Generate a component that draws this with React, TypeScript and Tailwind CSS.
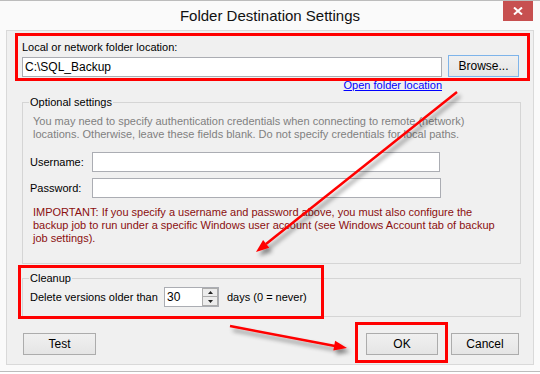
import React from 'react';

const Btn: React.FC<{ label: string; w: string; focus?: boolean }> = ({ label, w, focus }) => (
  <div
    className={`${w} h-[22px] flex items-center justify-center border bg-[linear-gradient(#f0f0f0,#e5e5e5)] text-[12px] text-black ${
      focus ? 'border-[#7eb4ea]' : 'border-[#acacac]'
    }`}
  >
    {label}
  </div>
);

const TextBox: React.FC<{ w: string; value?: string }> = ({ w, value }) => (
  <div className={`${w} h-[20px] border border-[#abadb3] bg-white flex items-center px-[2px] text-[12px] text-black`}>
    {value}
  </div>
);

// arrow overlay, drawn on top of the dialog like in the original annotation
const Annotations: React.FC = () => (
  <svg className="absolute inset-0 pointer-events-none" width={540} height={374} viewBox="0 0 540 374">
    <defs>
      <filter id="sh" x="-20%" y="-20%" width="140%" height="140%">
        <feDropShadow dx="3" dy="4" stdDeviation="2" floodColor="#000" floodOpacity="0.45" />
      </filter>
    </defs>
    <rect x={16.5} y={34.5} width={512} height={45} fill="none" stroke="#ff0000" strokeWidth={3} />
    <rect x={19.5} y={266.5} width={303} height={51} fill="none" stroke="#ff0000" strokeWidth={3} />
    <rect x={356.5} y={323.5} width={90} height={38} fill="none" stroke="#ff0000" strokeWidth={3} />
    <g filter="url(#sh)">
      <line x1={457} y1={92} x2={266} y2={244} stroke="#ff0000" strokeWidth={2.5} />
      <polygon points="256,252 269.3,247.8 263.1,240" fill="#ff0000" />
      <line x1={230} y1={326} x2={335} y2={346} stroke="#ff0000" strokeWidth={2.5} />
      <polygon points="347,348 333.3,350.5 335.1,340.7" fill="#ff0000" />
    </g>
  </svg>
);

export default function App() {
  return (
    <div className="relative w-[540px] h-[374px] bg-white font-['Liberation_Sans',Arial,sans-serif] text-[11px] leading-[13px] text-black overflow-hidden">
      <div className="h-[372px] bg-[#fafafa] border-t border-b border-[#bcbcbc] flex flex-col">
        {/* title bar */}
        <div className="h-[29px] grid grid-cols-[1fr_auto_1fr] items-center">
          <div />
          <div className="text-[15px] leading-[20px] text-[#111]">Folder Destination Settings</div>
          <div className="justify-self-end self-start mr-[7px] w-[30px] h-[20px] bg-[#c75050] flex items-center justify-center">
            <svg width="10" height="8" viewBox="0 0 10 8">
              <path d="M1 0.5 L9 7.5 M9 0.5 L1 7.5" stroke="#fff" strokeWidth="2" />
            </svg>
          </div>
        </div>

        {/* client area */}
        <div className="ml-[6px] w-[528px] h-[335px] bg-[#f0f0f0] border border-[#d9d9d9] flex flex-col">
          <div className="pl-[15px] pt-[10px]">Local or network folder location:</div>
          <div className="pl-[15px] mt-[1px] flex items-end">
            <TextBox w="w-[420px]" value="C:\SQL_Backup" />
            <div className="ml-[6px]">
              <Btn label="Browse..." w="w-[71px]" focus />
            </div>
          </div>
          <div className="w-[435px] mt-[2px] flex justify-end">
            <span className="text-[#0000ff] underline">Open folder location</span>
          </div>

          <fieldset className="ml-[15px] mt-[4px] w-[499px] border border-[#d5d5d5] pl-[7px] pb-[18px]">
            <legend className="ml-[-1px] px-[1px]">Optional settings</legend>
            <div className="pt-[6px] ml-[3px] text-[#808080] whitespace-nowrap">
              You may need to specify authentication credentials when connecting to remote (network)
              <br />
              locations. Otherwise, leave these fields blank. Do not specify credentials for local paths.
            </div>
            <div className="mt-[11px] flex items-center">
              <div className="w-[62px]">Username:</div>
              <TextBox w="w-[348px]" />
            </div>
            <div className="mt-[6px] flex items-center">
              <div className="w-[62px]">Password:</div>
              <TextBox w="w-[349px]" />
            </div>
            <div className="mt-[8px] ml-[3px] text-[#8b0f0f] whitespace-nowrap">
              IMPORTANT: If you specify a username and password above, you must also configure the
              <br />
              backup job to run under a specific Windows user account (see Windows Account tab of backup
              <br />
              job settings).
            </div>
          </fieldset>

          <fieldset className="ml-[15px] mt-[8px] w-[499px] border border-[#d5d5d5] pl-[7px] pb-[9px]">
            <legend className="ml-[-1px] px-[1px]">Cleanup</legend>
            <div className="pt-[2px] flex items-center">
              <div className="w-[134px]">Delete versions older than</div>
              <div className="w-[55px] h-[20px] border border-[#abadb3] bg-white flex">
                <div className="flex-1 px-[2px] text-[12px] leading-[18px]">30</div>
                <div className="w-[16px] flex flex-col">
                  <div className="h-[9px] border border-[#acacac] bg-[#ececec] flex items-center justify-center">
                    <svg width="5" height="3" viewBox="0 0 5 3"><path d="M2.5 0 L5 3 L0 3 Z" fill="#222" /></svg>
                  </div>
                  <div className="h-[9px] border border-t-0 border-[#acacac] bg-[#ececec] flex items-center justify-center">
                    <svg width="5" height="3" viewBox="0 0 5 3"><path d="M0 0 L5 0 L2.5 3 Z" fill="#222" /></svg>
                  </div>
                </div>
              </div>
              <div className="ml-[8px]">days (0 = never)</div>
            </div>
          </fieldset>

          <div className="mt-[16px] pl-[16px] pr-[14px] flex items-center">
            <Btn label="Test" w="w-[73px]" />
            <div className="flex-1" />
            <Btn label="OK" w="w-[72px]" />
            <div className="ml-[13px]">
              <Btn label="Cancel" w="w-[68px]" />
            </div>
          </div>
        </div>
      </div>
      <Annotations />
    </div>
  );
}
